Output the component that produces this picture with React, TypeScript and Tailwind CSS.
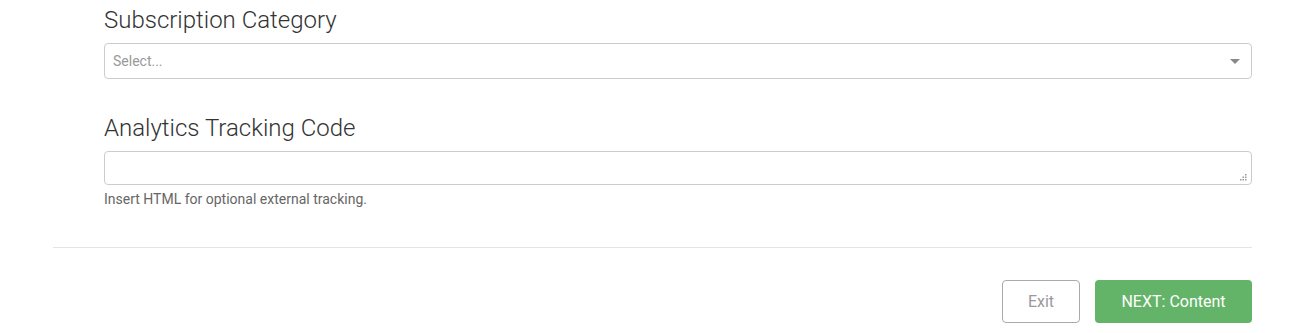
import React from 'react';

export default function App() {
  return (
    <div className="w-[1308px] h-[333px] bg-white overflow-hidden font-['Roboto',sans-serif]">
      <div className="ml-[53px] w-[1199px]">
        <div className="pl-[51px]">
          {/* subscription category */}
          <div className="pt-[6px]">
            <label className="block text-[24px] leading-[29px] font-light text-[#333]">Subscription Category</label>
            <div className="relative mt-[8px] h-[36px] border border-[#ccc] rounded-[4px] flex items-center px-[8px]">
              <span className="text-[14px] text-[#999]">Select...</span>
              <svg className="absolute right-[11px] top-[15px]" width="10" height="6" viewBox="0 0 10 6">
                <path d="M0 0 L10 0 L5 5 Z" fill="#888" />
              </svg>
            </div>
          </div>

          {/* analytics */}
          <div className="pt-[35px]">
            <label className="block text-[24px] leading-[29px] font-light text-[#333]">Analytics Tracking Code</label>
            <div className="relative mt-[8px]">
              <textarea className="block w-full h-[34px] border border-[#ccc] rounded-[4px] resize-none outline-none" />
              <svg className="absolute right-[5px] bottom-[4px]" width="7" height="7" viewBox="0 0 7 7">
                <rect x="5" y="0" width="1.5" height="1.5" fill="#999" />
                <rect x="2.5" y="2.5" width="1.5" height="1.5" fill="#999" />
                <rect x="5" y="2.5" width="1.5" height="1.5" fill="#999" />
                <rect x="0" y="5" width="1.5" height="1.5" fill="#999" />
                <rect x="2.5" y="5" width="1.5" height="1.5" fill="#999" />
                <rect x="5" y="5" width="1.5" height="1.5" fill="#999" />
              </svg>
            </div>
            <p className="mt-[5px] text-[14px] leading-[18px] text-[#666]">Insert HTML for optional external tracking.</p>
          </div>
        </div>

        <hr className="mt-[39px] border-t border-[#e5e5e5]" />

        <div className="flex justify-end gap-[15px] mt-[32px]">
          <button className="w-[78px] h-[43px] border border-[#aaa] rounded-[4px] text-[16px] text-[#999] bg-white">Exit</button>
          <button className="w-[157px] h-[43px] rounded-[4px] text-[16px] text-white bg-[#63b468]">NEXT: Content</button>
        </div>
      </div>
    </div>
  );
}
